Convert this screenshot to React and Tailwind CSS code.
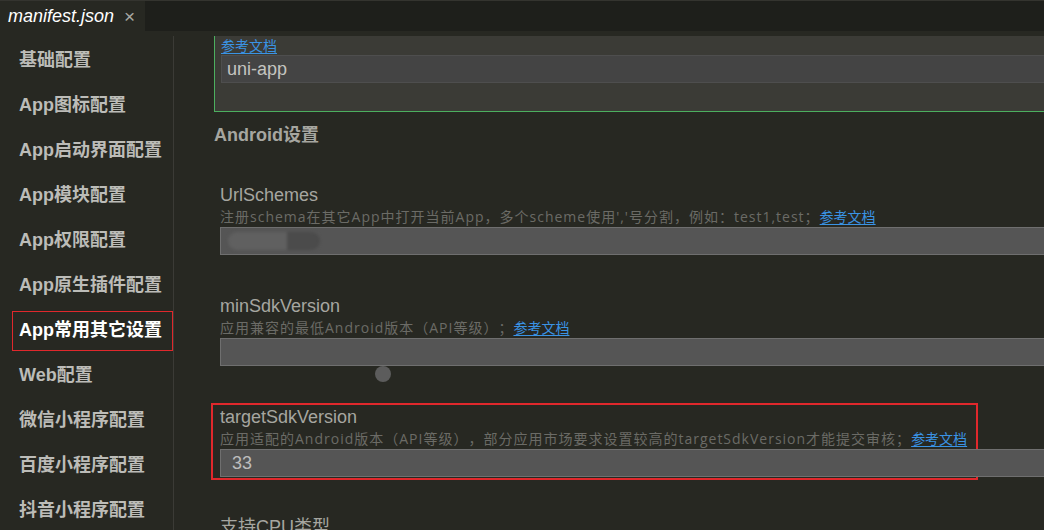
import React from "react";

const menu = [
  "基础配置",
  "App图标配置",
  "App启动界面配置",
  "App模块配置",
  "App权限配置",
  "App原生插件配置",
  "App常用其它设置",
  "Web配置",
  "微信小程序配置",
  "百度小程序配置",
  "抖音小程序配置",
];

const font = { fontFamily: '"Liberation Sans", "Noto Sans CJK SC", sans-serif' };
const desc = { fontFamily: '"Open Sans", "Noto Sans CJK SC", sans-serif' };

function DocLink() {
  return (
    <span className="text-[#3a93e4] underline underline-offset-2 tracking-normal" style={desc}>
      参考文档
    </span>
  );
}

function Field({ label, note, children, inputWidth = "w-[900px]" }) {
  return (
    <div className="flex flex-col">
      <div className="text-[18px] leading-[22px] text-[#a6a6a0] h-[22px]">{label}</div>
      <div
        className="text-[14px] leading-[21px] text-[#6b6b66] whitespace-nowrap h-[21px] tracking-[1px] [text-spacing-trim:space-all]"
        style={desc}
      >
        {note}
        <DocLink />
      </div>
      <div className={`h-[28px] ${inputWidth} bg-[#555555] border border-[#6f6f6f] flex items-center px-[11px] text-[18px] text-[#bdbdbd]`}>
        {children}
      </div>
    </div>
  );
}

export default function App() {
  return (
    <div className="w-[1044px] h-[530px] overflow-hidden bg-[#272822] flex flex-col" style={font}>
      {/* tab bar */}
      <div className="h-[31px] shrink-0 bg-[#1e1f1b] border-t border-[#34342f] flex">
        <div className="w-[145px] bg-[#272822] flex items-center pl-[8px] gap-[10px]">
          <span className="italic text-[18px] text-white">manifest.json</span>
          <span className="text-[#a8a8a4] text-[19px] leading-none">×</span>
        </div>
      </div>

      <div className="flex flex-1 min-h-0 pt-[5px]">
        {/* sidebar */}
        <div className="w-[174px] shrink-0 border-r border-[#3b3b36] pt-[2px]">
          {menu.map((m, i) => (
            <div key={m} className="h-[45px] flex items-center pl-[12px]">
              <div
                className={`w-full h-[40px] flex items-center px-[6px] border font-bold text-[18px] ${
                  i === 6 ? "border-[#e0282c] text-white" : "border-transparent text-[#bcbcb8]"
                }`}
              >
                {m}
              </div>
            </div>
          ))}
        </div>

        {/* content */}
        <div className="flex-1 overflow-hidden pl-[40px]">
          <div className="w-[900px] h-[76px] bg-[#3b3b36] border-l border-b border-[#4caf5f] pl-[6px] pt-[1px]">
            <div className="text-[14px] leading-[17px]"><DocLink /></div>
            <div className="h-[28px] bg-[#444444] border border-[#4e4e4e] flex items-center px-[5px] text-[18px] text-[#c4c4c0]">
              uni-app
            </div>
          </div>

          <div className="font-bold text-[18px] text-[#a6a6a0] mt-[12px] h-[22px] leading-[22px]">Android设置</div>

          <div className="pl-[6px] mt-[38px] flex flex-col">
            <Field label="UrlSchemes" note="注册schema在其它App中打开当前App，多个scheme使用','号分割，例如：test1,test；">
              <div className="flex blur-[1.5px] ml-[-4px]">
                <div className="w-[59px] h-[18px] bg-[#606060] rounded-l-full" />
                <div className="w-[33px] h-[18px] bg-[#4b4b4b] rounded-r-full" />
              </div>
            </Field>

            <div className="mt-[40px]">
              <Field label="minSdkVersion" note="应用兼容的最低Android版本（API等级）；" />
              <div className="ml-[155px] w-[16px] h-[16px] rounded-full bg-[#5c5c5c]" />
            </div>

            <div className="mt-[21px] ml-[-9px] w-[767px] border-2 border-solid border-[#e0282c] pl-[7px] pt-[1px] pb-[1px]">
              <Field
                inputWidth="w-[826px]"
                label="targetSdkVersion"
                note="应用适配的Android版本（API等级），部分应用市场要求设置较高的targetSdkVersion才能提交审核；"
              >
                33
              </Field>
            </div>

            <div className="mt-[36px] text-[18px] leading-[22px] text-[#a6a6a0]">支持CPU类型</div>
          </div>
        </div>
      </div>
    </div>
  );
}
